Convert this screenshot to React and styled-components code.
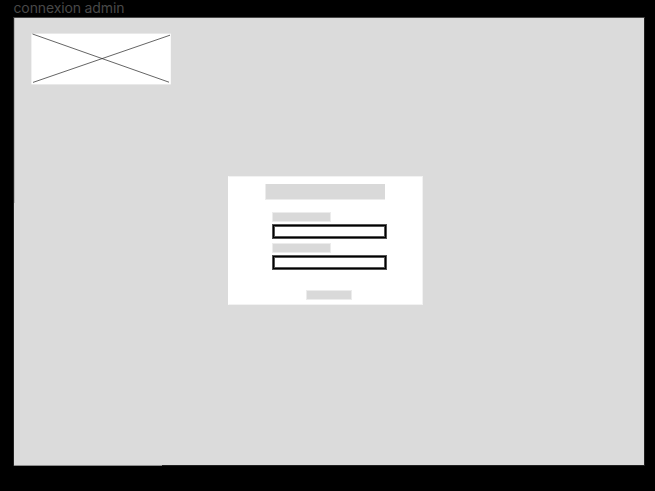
import React from "react";
import styled, { createGlobalStyle } from "styled-components";

const GlobalStyle = createGlobalStyle`
  * { box-sizing: border-box; }
  body { margin: 0; background: #000; overflow: hidden; }
`;

const Canvas = styled.main`
  width: 655px;
  height: 491px;
  padding-left: 13px;
  background: #000;
  font-family: Inter, "Liberation Sans", sans-serif;
`;

const FrameName = styled.h1`
  height: 17px;
  margin: 0;
  padding-left: 0.5px;
  color: #494949;
  font-size: 14px;
  font-weight: 400;
  line-height: 15px;
  letter-spacing: -0.13px;
  white-space: nowrap;
`;

const Frame = styled.section`
  display: flex;
  flex-direction: column;
  width: 632px;
  height: 449px;
  padding: 15px 17px;
  border: 1px solid #202020;
  border-top-color: #484848;
  background:
    linear-gradient(#b8b8b8, #b8b8b8) 0 0 / 1px 185px no-repeat,
    #dbdbdb;
`;

const FrameEdge = styled.div`
  width: 148px;
  height: 1px;
  margin: -1px 0 0 1px;
  background: #8c8c8c;
`;

const Logo = styled.svg`
  display: block;
  flex: none;
  width: 140px;
  height: 52px;
`;

const Card = styled.form`
  display: flex;
  flex-direction: column;
  align-items: center;
  width: 195px;
  height: 129px;
  margin: 91px 0 0 197px;
  padding-top: 7px;
  border: 1px solid #f2f2f2;
  border-left-color: #fff;
  background: #fff;
`;

const Block = styled.div`
  flex: none;
  width: ${({ $width }) => $width}px;
  height: ${({ $height }) => $height}px;
  border: 1px solid #ececec;
  background: #d9d9d9;
`;

const Title = styled(Block)`
  margin-right: 1px;
  border-width: 0 0 1px 1px;
`;

const Fields = styled.div`
  display: grid;
  row-gap: 4px;
  width: 115px;
  margin: 12px 0 0 8px;
`;

const Field = styled.div`
  display: grid;
  row-gap: 2px;
`;

const Input = styled.div`
  height: 15px;
  border: 1px solid #545454;
  background: #fff;
  box-shadow: inset 0 0 0 1px #000, inset 0 0 0 2px #555;
`;

const Submit = styled(Block)`
  margin: 20px 0 0 7px;
`;

export default function App() {
  return (
    <>
      <GlobalStyle />
      <Canvas>
        <FrameName>connexion admin</FrameName>
        <Frame>
          <Logo viewBox="0 0 140 52" aria-label="Logo">
            <rect x="0.4" y="0.6" width="139.4" height="50.8" fill="#fff" />
            <path d="M1.5 1 138 49.2M2 49.4 139 2.2" fill="none" stroke="#222" strokeWidth="0.7" />
          </Logo>
          <Card>
            <Title $width={120} $height={16} />
            <Fields>
              <Field>
                <Block $width={59} $height={10} />
                <Input />
              </Field>
              <Field>
                <Block $width={59} $height={10} />
                <Input />
              </Field>
            </Fields>
            <Submit $width={46} $height={10} />
          </Card>
        </Frame>
        <FrameEdge />
      </Canvas>
    </>
  );
}
